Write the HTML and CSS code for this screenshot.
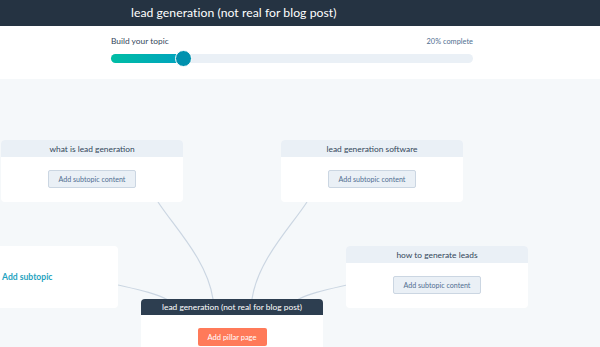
FILE: index.html
```html
<!DOCTYPE html>
<html lang="en">
<head>
    <meta charset="UTF-8">
    <title>Topic cluster</title>
    <link rel="stylesheet" href="styles.css">
</head>
<body>
    <header class="topbar">
        <h1>lead generation (not real for blog post)</h1>
    </header>

    <!-- Progress panel -->
    <section class="progress-panel">
        <div class="progress-labels">
            <span class="progress-title">Build your topic</span>
            <span class="progress-count">20% complete</span>
        </div>
        <div class="progress-track">
            <div class="progress-fill"></div>
            <div class="progress-knob"></div>
        </div>
    </section>

    <!-- Topic map -->
    <main class="canvas">
        <svg class="links" width="600" height="268" viewBox="0 79 600 268">
            <path d="M158 202 C175 228 207 260 213 299" />
            <path d="M307 202 C290 228 258 260 252 299" />
            <path d="M118 285 C140 290 155 293 168 300" />
            <path d="M347 285 C325 290 310 293 297 300" />
        </svg>

        <div class="node subtopic" style="left: 1px; top: 61px;">
            <div class="node-head">what is lead generation</div>
            <div class="node-body"><button class="btn-secondary">Add subtopic content</button></div>
        </div>

        <div class="node subtopic" style="left: 281px; top: 61px;">
            <div class="node-head">lead generation software</div>
            <div class="node-body"><button class="btn-secondary">Add subtopic content</button></div>
        </div>

        <div class="node empty" style="left: -64px; top: 167px;">
            <a class="add-link" href="#">Add subtopic</a>
        </div>

        <div class="node subtopic" style="left: 346px; top: 167px;">
            <div class="node-head">how to generate leads</div>
            <div class="node-body"><button class="btn-secondary">Add subtopic content</button></div>
        </div>

        <div class="node pillar" style="left: 141px; top: 220px;">
            <div class="node-head">lead generation (not real for blog post)</div>
            <div class="node-body"><button class="btn-primary">Add pillar page</button></div>
        </div>
    </main>
</body>
</html>
```

FILE: styles.css
```css
body {
    margin: 0;
    font-family: Lato, "Open Sans", sans-serif;
    color: #33475b;
    background: #f5f8fa;
    overflow: hidden;
}

.topbar {
    height: 26px;
    background-color: #253342;
    padding-left: 131px;
    display: flex;
    align-items: center;
}

.topbar h1 {
    margin: 0 0 2px;
    font-size: 12.2px;
    font-weight: 400;
    color: #ffffff;
    letter-spacing: 0.05px;
}

.progress-panel {
    height: 53px;
    background-color: #ffffff;
    box-sizing: border-box;
    padding: 10px 127px 0 111px;
}

.progress-labels {
    display: flex;
    justify-content: space-between;
    align-items: baseline;
}

.progress-title {
    font-size: 8.4px;
    color: #33475b;
}

.progress-count {
    font-size: 7.4px;
    color: #516f90;
}

.progress-track {
    position: relative;
    margin-top: 8px;
    height: 9px;
    border-radius: 5px;
    background-color: #eaf0f6;
}

.progress-fill {
    width: 68px;
    height: 100%;
    border-radius: 5px 0 0 5px;
    background: linear-gradient(90deg, #00bda5, #00a4bd);
}

/* knob sits on top of the track */
.progress-knob {
    position: absolute;
    left: 64px;
    top: -4px;
    width: 15px;
    height: 15px;
    border-radius: 50%;
    background-color: #0091ae;
    border: 1px solid #ffffff;
}

.canvas {
    position: relative;
    height: 268px;
    background-color: #f5f8fa;
}

.links {
    position: absolute;
    left: 0;
    top: 0;
}

.links path {
    fill: none;
    stroke: #cbd6e2;
    stroke-width: 1.2;
}

.node {
    position: absolute;
    width: 182px;
    height: 62px;
    background-color: #ffffff;
    border-radius: 4px;
    overflow: hidden;
    box-sizing: border-box;
}

.node-head {
    height: 17px;
    display: flex;
    align-items: center;
    justify-content: center;
    font-size: 8.4px;
    background-color: #eaf0f6;
    color: #33475b;
}

.node-body {
    display: flex;
    justify-content: center;
    padding-top: 13px;
}

.btn-secondary {
    width: 88px;
    height: 18px;
    padding: 0;
    font-family: inherit;
    font-size: 7.1px;
    color: #506e91;
    background-color: #eaf0f6;
    border: 1px solid #cbd6e2;
    border-radius: 2px;
}

.node.empty {
    display: flex;
    align-items: center;
    padding-left: 66px;
}

.add-link {
    font-size: 8.6px;
    font-weight: 700;
    color: #1fa3c0;
    text-decoration: none;
}

.pillar {
    height: 60px;
}

.pillar .node-head {
    height: 16px;
    background-color: #2d3e50;
    color: #ffffff;
}

.btn-primary {
    width: 69px;
    height: 18px;
    padding: 0;
    font-family: inherit;
    font-size: 7.5px;
    color: #ffffff;
    background-color: #ff7a59;
    border: none;
    border-radius: 2px;
}
```
